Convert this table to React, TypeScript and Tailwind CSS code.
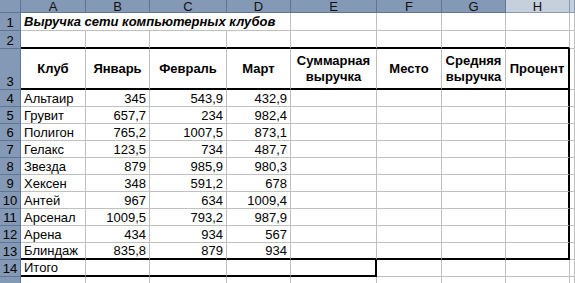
const cols = ['A', 'B', 'C', 'D', 'E', 'F', 'G', 'H', ''];

const rows: [string, string, string, string][] = [
  ['Альтаир', '345', '543,9', '432,9'],
  ['Грувит', '657,7', '234', '982,4'],
  ['Полигон', '765,2', '1007,5', '873,1'],
  ['Гелакс', '123,5', '734', '487,7'],
  ['Звезда', '879', '985,9', '980,3'],
  ['Хексен', '348', '591,2', '678'],
  ['Антей', '967', '634', '1009,4'],
  ['Арсенал', '1009,5', '793,2', '987,9'],
  ['Арена', '434', '934', '567'],
  ['Блиндаж', '835,8', '879', '934'],
];

const gray = 'border-r border-b border-[#c0c0c0]';
const rowHead =
  'bg-[#8499b5] border-r border-b border-[#5f7694] flex justify-center items-end leading-[15px]';

export default function App() {
  return (
    <div
      className="w-[575px] h-[283px] overflow-hidden bg-white text-black text-[13px]"
      style={{ fontFamily: '"Liberation Sans", Arial, sans-serif' }}
    >
      <div className="grid grid-cols-[21px_65px_64px_77px_64px_86px_65px_64px_64px_1fr] grid-rows-[13px_18px_18px_41px_repeat(11,17px)_17px]">
        {/* column headers */}
        <div className="bg-[#8499b5] border-r border-b border-[#5f7694]" />
        {cols.map((c, i) => (
          <div
            key={i}
            className={`${i >= 7 ? 'bg-[#c6d0dc] border-[#8a9bb0]' : 'bg-[#8499b5] border-[#5f7694]'} border-r border-b flex justify-center items-center leading-[13px] text-[#111]`}
          >
            {c}
          </div>
        ))}

        {/* row 1 */}
        <div className={rowHead}>1</div>
        <div className={`${gray} col-span-4 pl-[3px] flex items-end font-bold italic whitespace-nowrap leading-[16px]`}>
          Выручка сети компьютерных клубов
        </div>
        <div className={gray} />
        <div className={gray} />
        <div className={gray} />
        <div className={gray} />
        <div className={gray} />

        {/* row 2 */}
        <div className={rowHead}>2</div>
        {cols.slice(0, 8).map(c => (
          <div key={c} className="border-r border-[#c0c0c0] border-b-2 border-b-black" />
        ))}
        <div className={gray} />

        {/* row 3 */}
        <div className={rowHead}>3</div>
        {['Клуб', 'Январь', 'Февраль', 'Март', 'Суммарная выручка', 'Место', 'Средняя выручка', 'Процент'].map((t, i) => (
          <div
            key={t}
            className={`${i === 7 ? 'border-r-2 border-r-black' : 'border-r border-r-[#c0c0c0]'} border-b-2 border-b-black flex items-center justify-center text-center font-bold leading-[16px] px-[1px]`}
          >
            {t}
          </div>
        ))}
        <div className={gray} />

        {/* data rows */}
        {rows.map((r, ri) => {
          const last = ri === rows.length - 1;
          const bottom = last ? 'border-b-2 border-b-black' : 'border-b border-b-[#c0c0c0]';
          return [
            <div key={`h${ri}`} className={rowHead}>{ri + 4}</div>,
            <div key={`a${ri}`} className={`border-r border-r-[#c0c0c0] ${bottom} pl-[3px] flex items-end leading-[15px] whitespace-nowrap`}>{r[0]}</div>,
            ...r.slice(1).map((v, vi) => (
              <div key={`v${ri}${vi}`} className={`border-r border-r-[#c0c0c0] ${bottom} pr-[3px] flex items-end justify-end leading-[15px]`}>{v}</div>
            )),
            <div key={`e${ri}`} className={`border-r border-r-[#c0c0c0] ${bottom}`} />,
            <div key={`f${ri}`} className={`border-r border-r-[#c0c0c0] ${bottom}`} />,
            <div key={`g${ri}`} className={`border-r border-r-[#c0c0c0] ${bottom}`} />,
            <div key={`hh${ri}`} className={`border-r-2 border-r-black ${bottom}`} />,
            <div key={`i${ri}`} className={gray} />,
          ];
        })}

        {/* row 14 */}
        <div className={rowHead}>14</div>
        <div className="border-r border-r-[#c0c0c0] border-b-2 border-b-black pl-[3px] flex items-end leading-[15px]">Итого</div>
        <div className="border-r border-r-[#c0c0c0] border-b-2 border-b-black" />
        <div className="border-r border-r-[#c0c0c0] border-b-2 border-b-black" />
        <div className="border-r border-r-[#c0c0c0] border-b-2 border-b-black" />
        <div className="border-r-2 border-r-black border-b-2 border-b-black" />
        <div className={gray} />
        <div className={gray} />
        <div className={gray} />
        <div className={gray} />

        {/* row 15, only its top edge is in view */}
        <div className="bg-[#8499b5] border-r border-[#5f7694]" />
        {cols.map((c, i) => (
          <div key={i} className="border-r border-[#c0c0c0]" />
        ))}
      </div>
    </div>
  );
}
